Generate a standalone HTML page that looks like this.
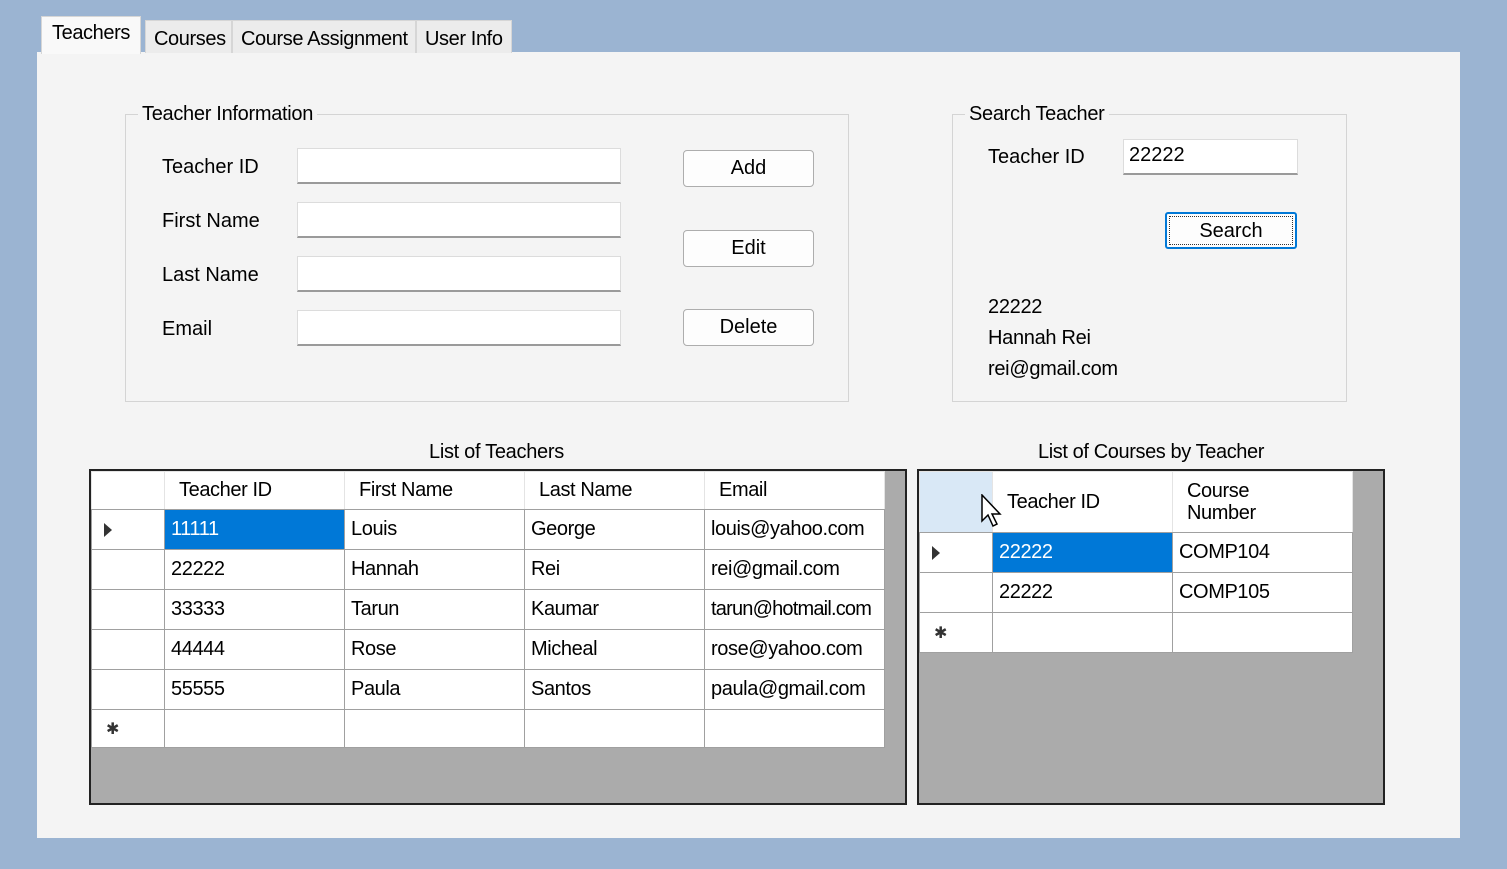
<!DOCTYPE html>
<html><head><meta charset="utf-8"><style>
*{box-sizing:border-box;margin:0;padding:0}
body{width:1507px;height:869px;background:#9bb4d2;font-family:"Liberation Sans",sans-serif;font-size:20px;color:#000;position:relative;overflow:hidden}
.a{position:absolute}
.panel{left:37px;top:52px;width:1423px;height:786px;background:#f4f4f4}
.tab{top:20px;height:33px;background:#ececec;border:1px solid #d6d6d6;border-bottom:none;padding:4px 8px;white-space:nowrap;letter-spacing:-0.4px}
.grp{border:1px solid #d4d4d4}
.lg{background:#f4f4f4;padding:0 4px;top:-12px;left:12px;position:absolute;letter-spacing:-0.3px}
.tb{background:#fff;border:1px solid #dcdcdc;border-bottom:2px solid #9a9a9a;height:36px}
.btn{background:#fdfdfd;border:1px solid #adadad;border-radius:4px;height:37px;text-align:center;line-height:35px}
.grid{border:2px solid #222;background:#ababab}
table{border-collapse:collapse;position:absolute;left:0;top:0;table-layout:fixed}
td{border:1px solid #a0a0a0;background:#fff;padding:0 6px;white-space:nowrap;overflow:hidden;letter-spacing:-0.4px}
.h td{border-color:#e4e4e4 #e4e4e4 #a0a0a0;padding-left:14px}
.rh{padding:0;text-align:left}
.sel{background:#0078d7;color:#fff}
.tri{display:inline-block;width:0;height:0;border-left:8px solid #333;border-top:7px solid transparent;border-bottom:7px solid transparent;margin-left:12px;vertical-align:middle}
.st{font-size:16px;margin-left:14px;color:#333}
</style></head><body>
<div class="a panel"></div>
<div class="a tab" style="left:41px;top:16px;height:38px;background:#f9f9f9;padding:5px 10px">Teachers</div>
<div class="a tab" style="left:145px;width:87px;padding-top:7px">Courses</div>
<div class="a tab" style="left:232px;width:184px;padding-top:7px">Course Assignment</div>
<div class="a tab" style="left:416px;width:96px;padding-top:7px">User Info</div>

<div class="a grp" style="left:125px;top:114px;width:724px;height:288px"><span class="lg">Teacher Information</span></div>
<div class="a" style="left:162px;top:156px">Teacher ID</div>
<div class="a" style="left:162px;top:210px">First Name</div>
<div class="a" style="left:162px;top:264px">Last Name</div>
<div class="a" style="left:162px;top:318px">Email</div>
<div class="a tb" style="left:297px;top:148px;width:324px"></div>
<div class="a tb" style="left:297px;top:202px;width:324px"></div>
<div class="a tb" style="left:297px;top:256px;width:324px"></div>
<div class="a tb" style="left:297px;top:310px;width:324px"></div>
<div class="a btn" style="left:683px;top:150px;width:131px">Add</div>
<div class="a btn" style="left:683px;top:230px;width:131px">Edit</div>
<div class="a btn" style="left:683px;top:309px;width:131px">Delete</div>

<div class="a grp" style="left:952px;top:114px;width:395px;height:288px"><span class="lg">Search Teacher</span></div>
<div class="a" style="left:988px;top:146px">Teacher ID</div>
<div class="a tb" style="left:1123px;top:139px;width:175px;padding:4px 5px">22222</div>
<div class="a btn" style="left:1165px;top:212px;width:132px;border:2px solid #0078d7;border-radius:3px;line-height:35px"><div style="position:absolute;inset:2px;border:1px dotted #333"></div>Search</div>
<div class="a" style="left:988px;top:292px;line-height:31px;letter-spacing:-0.3px">22222<br>Hannah Rei<br>rei@gmail.com</div>

<div class="a" style="left:429px;top:441px;letter-spacing:-0.3px">List of Teachers</div>
<div class="a" style="left:1038px;top:441px;letter-spacing:-0.4px">List of Courses by Teacher</div>

<div class="a grid" style="left:89px;top:469px;width:818px;height:336px">
<table style="width:793px">
<colgroup><col style="width:73px"><col style="width:180px"><col style="width:180px"><col style="width:180px"><col style="width:180px"></colgroup>
<tr class="h" style="height:38px"><td></td><td>Teacher ID</td><td>First Name</td><td>Last Name</td><td>Email</td></tr>
<tr style="height:40px"><td class="rh"><span class="tri"></span></td><td class="sel">11111</td><td>Louis</td><td>George</td><td>louis@yahoo.com</td></tr>
<tr style="height:40px"><td class="rh"></td><td>22222</td><td>Hannah</td><td>Rei</td><td>rei@gmail.com</td></tr>
<tr style="height:40px"><td class="rh"></td><td>33333</td><td>Tarun</td><td>Kaumar</td><td style="letter-spacing:-0.8px">tarun@hotmail.com</td></tr>
<tr style="height:40px"><td class="rh"></td><td>44444</td><td>Rose</td><td>Micheal</td><td>rose@yahoo.com</td></tr>
<tr style="height:40px"><td class="rh"></td><td>55555</td><td>Paula</td><td>Santos</td><td>paula@gmail.com</td></tr>
<tr style="height:38px"><td class="rh"><span class="st">✱</span></td><td></td><td></td><td></td><td></td></tr>
</table></div>

<div class="a grid" style="left:917px;top:469px;width:468px;height:336px">
<table style="width:433px">
<colgroup><col style="width:73px"><col style="width:180px"><col style="width:180px"></colgroup>
<tr class="h" style="height:61px"><td style="background:#d9e8f6"></td><td>Teacher ID</td><td style="line-height:22px">Course<br>Number</td></tr>
<tr style="height:40px"><td class="rh"><span class="tri"></span></td><td class="sel">22222</td><td>COMP104</td></tr>
<tr style="height:40px"><td class="rh"></td><td>22222</td><td>COMP105</td></tr>
<tr style="height:40px"><td class="rh"><span class="st">✱</span></td><td></td><td></td></tr>
</table></div>
<svg class="a" style="left:981px;top:494px" width="22" height="34" viewBox="0 0 22 34"><path d="M1 1 L1 27 L7 21 L12 32 L16 30 L11 20 L19 20 Z" fill="#fff" stroke="#000" stroke-width="1.5"/></svg>
</body></html>
